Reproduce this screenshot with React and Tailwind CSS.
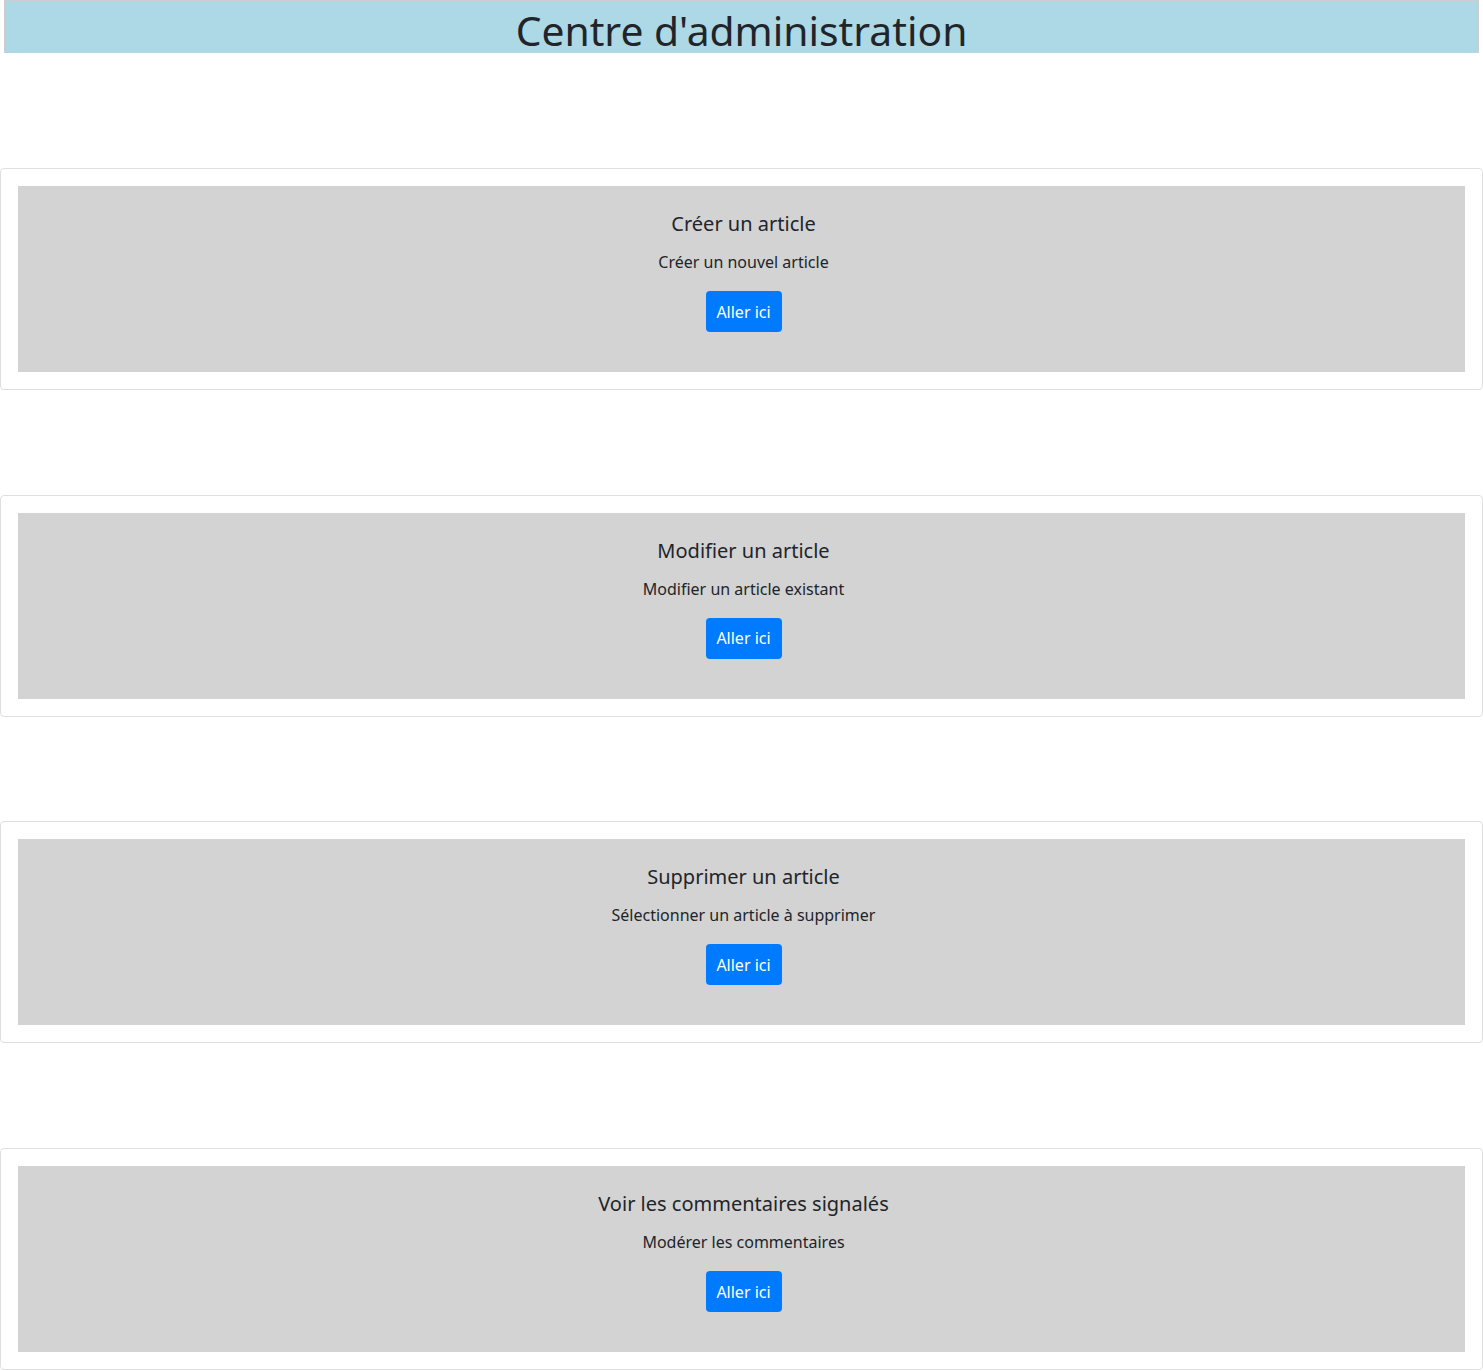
const cards = [
  { title: 'Créer un article', text: 'Créer un nouvel article' },
  { title: 'Modifier un article', text: 'Modifier un article existant' },
  { title: 'Supprimer un article', text: 'Sélectionner un article à supprimer' },
  { title: 'Voir les commentaires signalés', text: 'Modérer les commentaires' },
];

const AdminCard = ({ title, text }) => (
  <div className="border border-[#dfdfdf] rounded-[4px] p-[17px] bg-white">
    <div className="bg-[#d3d3d3] h-[186px] pt-[26px] pl-[4px] flex flex-col items-center text-center">
      <h5 className="text-[20px] leading-[24px] text-[#212529]">{title}</h5>
      <p className="mt-[14px] text-[16px] leading-[24px] text-[#212529]">{text}</p>
      <button className="mt-[17px] w-[76px] h-[41px] bg-[#007bff] text-white text-[16px] rounded-[4px] flex items-center justify-center">
        Aller ici
      </button>
    </div>
  </div>
);

export default function App() {
  return (
    <div className="min-h-[1371px] bg-white font-['Noto_Sans','Open_Sans',sans-serif]">
      <div className="mx-[4px] h-[53px] bg-[#add8e6] border-t border-x border-[#cccccc] flex items-end justify-center">
        <h1 className="text-[40.8px] leading-[52px] text-[#212529] -mb-[3px]">Centre d'administration</h1>
      </div>
      <div className="mt-[115px] flex flex-col gap-[104.7px]">
        {cards.map(c => (
          <AdminCard key={c.title} title={c.title} text={c.text} />
        ))}
      </div>
    </div>
  );
}
